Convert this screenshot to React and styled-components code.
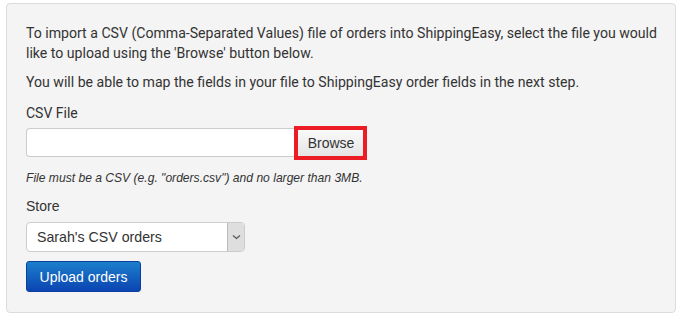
import React from "react";
import styled, { createGlobalStyle } from "styled-components";

const Global = createGlobalStyle`
  html, body { margin: 0; padding: 0; background: #fff; }
  body { font-family: Roboto, "Liberation Sans", Arial, sans-serif; color: #333; }
  * { box-sizing: border-box; }
`;

const Page = styled.div`
  width: 684px;
  height: 320px;
  padding: 3px 8px 0 6px;
`;

const Panel = styled.div`
  background: #f4f4f4;
  border: 1px solid #dcdcdc;
  border-radius: 4px;
  padding: 19px 12px 20px 19px;
  display: flex;
  flex-direction: column;
  align-items: flex-start;
`;

const Para = styled.p`
  margin: 0 0 ${(p) => p.$mb || 9}px;
  font-family: Roboto, sans-serif;
  font-size: 14.1px;
  line-height: 20px;
  color: #333;
`;

const Label = styled.div`
  font-family: ${(p) => (p.$arial ? '"Liberation Sans", Arial, sans-serif' : "Roboto, sans-serif")};
  font-size: 14px;
  line-height: 20px;
  color: #333;
  margin-bottom: ${(p) => p.$mb}px;
`;

const FileRow = styled.div`
  display: flex;
  align-items: stretch;
  height: 29px;
  margin-bottom: 13px;
`;

const FileInput = styled.div`
  width: 271px;
  background: #fff;
  border: 1px solid #ccc;
  border-right: none;
  border-radius: 4px 0 0 4px;
`;

const BrowseWrap = styled.div`
  position: relative;
  display: flex;
`;

const BrowseButton = styled.button`
  width: 68px;
  font-family: "Liberation Sans", Arial, sans-serif;
  font-size: 14px;
  color: #333;
  background: linear-gradient(#fbfbfb, #e4e4e4);
  border: 1px solid #bbb;
  border-radius: 0 4px 4px 0;
  padding: 0;
`;

const Highlight = styled.div`
  position: absolute;
  left: -3px;
  top: -2px;
  right: -2px;
  bottom: -3px;
  border: 4px solid #ec1c24;
  pointer-events: none;
`;

const Hint = styled.div`
  font-family: "Liberation Sans", Arial, sans-serif;
  font-style: italic;
  font-size: 12.1px;
  line-height: 17px;
  color: #333;
  margin-bottom: 9px;
`;

const SelectBox = styled.div`
  width: 219px;
  height: 30px;
  display: flex;
  background: #fff;
  border: 1px solid #ccc;
  border-radius: 4px;
  margin-bottom: 9px;
  overflow: hidden;
`;

const SelectText = styled.div`
  flex: 1;
  padding-left: 10px;
  display: flex;
  align-items: center;
  font-family: "Liberation Sans", Arial, sans-serif;
  font-size: 14.2px;
  color: #333;
`;

const SelectArrow = styled.div`
  width: 17px;
  background: #dedede;
  border-left: 1px solid #bbb;
  display: flex;
  align-items: center;
  justify-content: center;
`;

const PrimaryButton = styled.button`
  width: 115px;
  height: 31px;
  font-family: "Liberation Sans", Arial, sans-serif;
  font-size: 14px;
  color: #fff;
  background: linear-gradient(#1c7fcb, #0b44b2);
  border: 1px solid #0a3f9e;
  border-radius: 3px;
  padding: 0;
`;

export default function App() {
  return (
    <>
      <Global />
      <Page>
        <Panel>
          <Para>
            To import a CSV (Comma-Separated Values) file of orders into ShippingEasy, select the file you would
            <br />
            like to upload using the 'Browse' button below.
          </Para>
          <Para $mb={11}>
            You will be able to map the fields in your file to ShippingEasy order fields in the next step.
          </Para>
          <Label $mb={5}>CSV File</Label>
          <FileRow>
            <FileInput />
            <BrowseWrap>
              <BrowseButton>Browse</BrowseButton>
              <Highlight />
            </BrowseWrap>
          </FileRow>
          <Hint>File must be a CSV (e.g. "orders.csv") and no larger than 3MB.</Hint>
          <Label $arial $mb={6}>Store</Label>
          <SelectBox>
            <SelectText>Sarah's CSV orders</SelectText>
            <SelectArrow>
              <svg width="9" height="6" viewBox="0 0 9 6">
                <path d="M1 1.5 L4.5 4.5 L8 1.5" fill="none" stroke="#555" strokeWidth="1.2" />
              </svg>
            </SelectArrow>
          </SelectBox>
          <PrimaryButton>Upload orders</PrimaryButton>
        </Panel>
      </Page>
    </>
  );
}
